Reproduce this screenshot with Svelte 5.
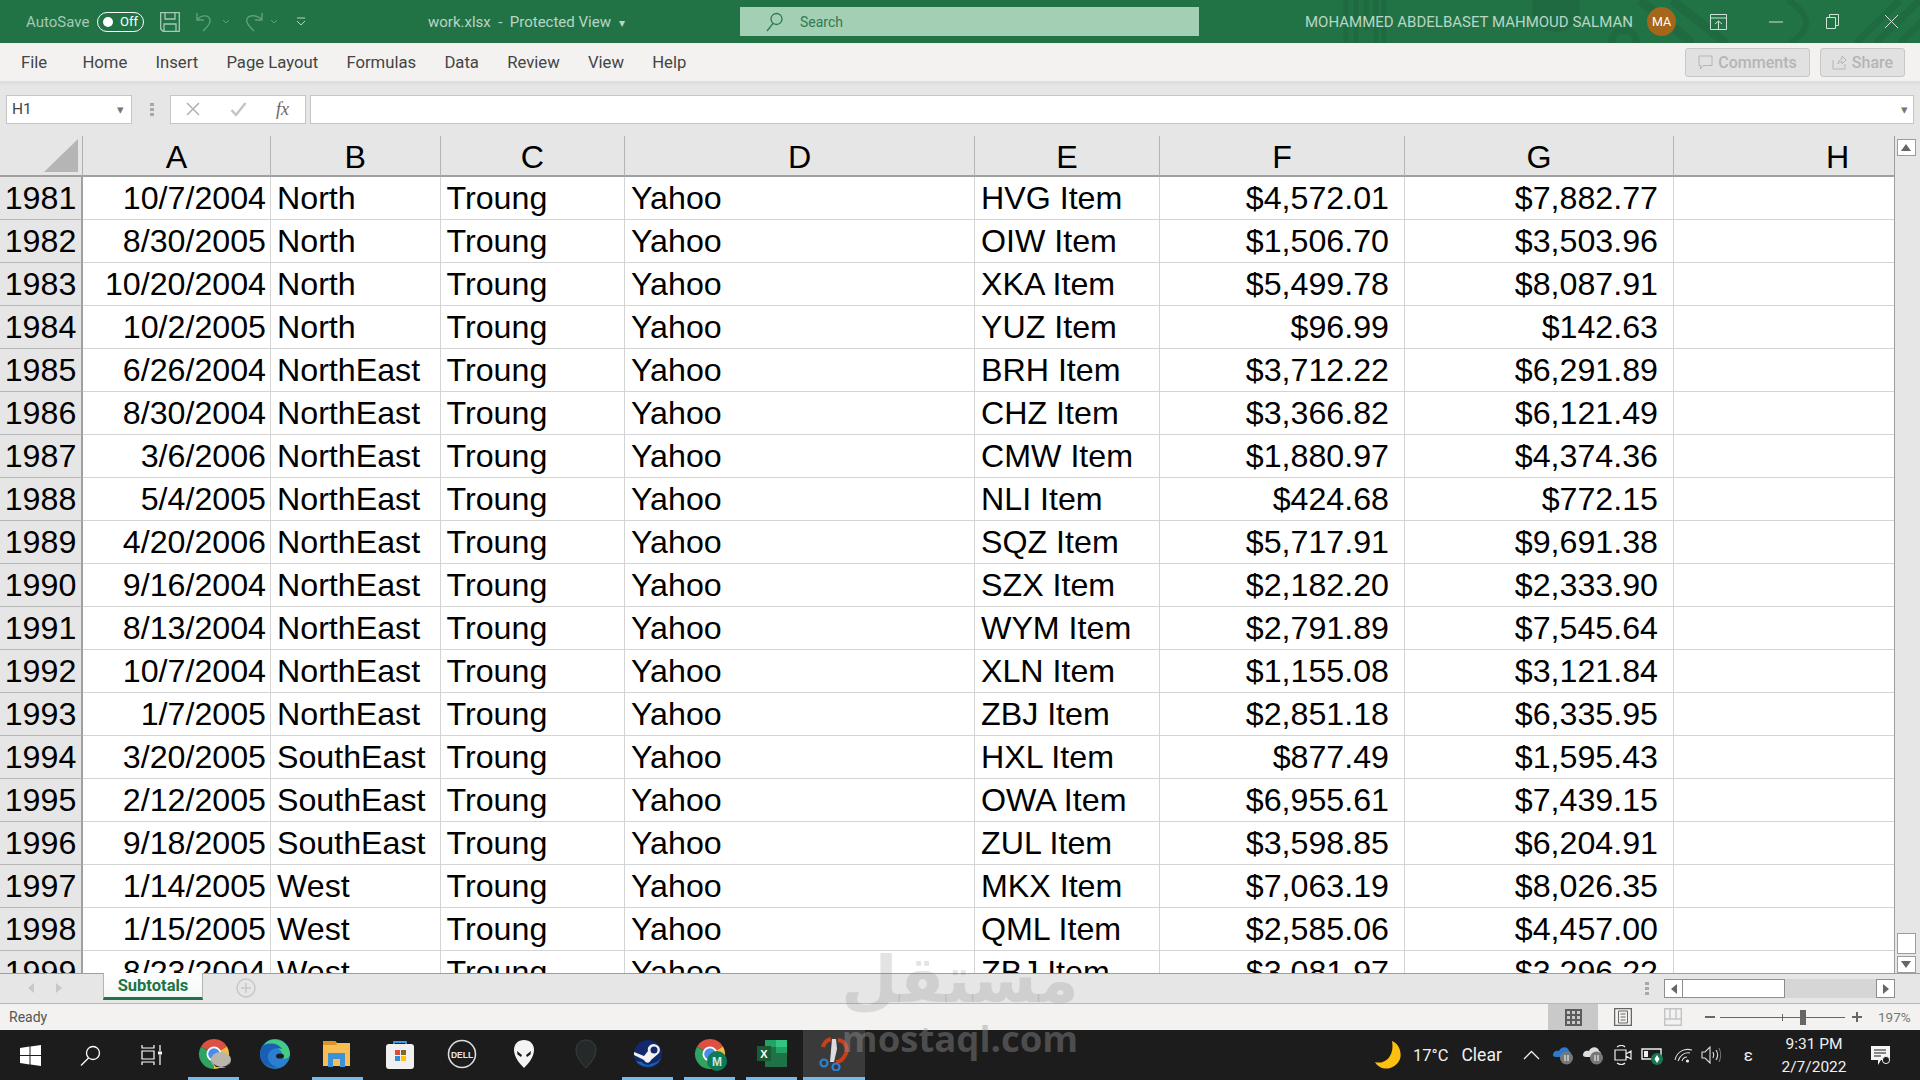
<script>
  const columns = ["A", "B", "C", "D", "E", "F", "G", "H"];

  const rows = [
    [1981, "10/7/2004", "North", "HVG Item", "$4,572.01", "$7,882.77"],
    [1982, "8/30/2005", "North", "OIW Item", "$1,506.70", "$3,503.96"],
    [1983, "10/20/2004", "North", "XKA Item", "$5,499.78", "$8,087.91"],
    [1984, "10/2/2005", "North", "YUZ Item", "$96.99", "$142.63"],
    [1985, "6/26/2004", "NorthEast", "BRH Item", "$3,712.22", "$6,291.89"],
    [1986, "8/30/2004", "NorthEast", "CHZ Item", "$3,366.82", "$6,121.49"],
    [1987, "3/6/2006", "NorthEast", "CMW Item", "$1,880.97", "$4,374.36"],
    [1988, "5/4/2005", "NorthEast", "NLI Item", "$424.68", "$772.15"],
    [1989, "4/20/2006", "NorthEast", "SQZ Item", "$5,717.91", "$9,691.38"],
    [1990, "9/16/2004", "NorthEast", "SZX Item", "$2,182.20", "$2,333.90"],
    [1991, "8/13/2004", "NorthEast", "WYM Item", "$2,791.89", "$7,545.64"],
    [1992, "10/7/2004", "NorthEast", "XLN Item", "$1,155.08", "$3,121.84"],
    [1993, "1/7/2005", "NorthEast", "ZBJ Item", "$2,851.18", "$6,335.95"],
    [1994, "3/20/2005", "SouthEast", "HXL Item", "$877.49", "$1,595.43"],
    [1995, "2/12/2005", "SouthEast", "OWA Item", "$6,955.61", "$7,439.15"],
    [1996, "9/18/2005", "SouthEast", "ZUL Item", "$3,598.85", "$6,204.91"],
    [1997, "1/14/2005", "West", "MKX Item", "$7,063.19", "$8,026.35"],
    [1998, "1/15/2005", "West", "QML Item", "$2,585.06", "$4,457.00"],
    [1999, "8/23/2004", "West", "ZBJ Item", "$3,081.97", "$3,296.22"],
  ];

  const tabs = ["Home", "Insert", "Page Layout", "Formulas", "Data", "Review", "View", "Help"];
</script>

{#snippet chrome()}
  <path d="M20 20L7 12.5A15 15 0 0 1 33 12.5Z" fill="#dd5144" />
  <path d="M20 20L33 12.5A15 15 0 0 1 20 35Z" fill="#f3bd3f" />
  <path d="M20 20L20 35A15 15 0 0 1 7 12.5Z" fill="#2fa35f" />
  <circle cx="20" cy="20" r="7.5" fill="#fff" />
  <circle cx="20" cy="20" r="5.8" fill="#4a8bf0" />
{/snippet}

<div class="app">
  <header class="titlebar">
    <svg class="pattern" width="620" height="43" viewBox="0 0 620 43" fill="none" stroke="#1f6a41">
      <path d="M46 0V43M56 0V43M66 0V30M76 0V43M84 0V43" stroke-width="5" />
      <ellipse cx="256" cy="8" rx="24" ry="24" fill="#1f6a41" stroke="none" />
      <circle cx="324" cy="42" r="12" stroke-width="7" />
      <path d="M340 0L392 43M372 0L426 43" stroke-width="9" />
      <path d="M488 0C512 16 512 30 490 43" stroke-width="6" />
      <path d="M600 0L556 43M620 0L576 43M630 14L600 43" stroke-width="7" />
    </svg>

    <span class="autosave">AutoSave</span>
    <span class="toggle"><i></i>Off</span>
    <svg class="qa save" width="20" height="20" viewBox="0 0 20 20" fill="none" stroke="#a6c9b5" stroke-width="1.3">
      <path d="M.7.7H19.3V19.3H3L.7 17ZM5 .7V7H15V.7M4 19.3V12H16V19.3" />
    </svg>
    <svg class="qa undo" width="26" height="20" viewBox="0 0 26 20" fill="none" stroke="#5f9f7d" stroke-width="1.4">
      <path d="M1 1V8H8M1 8C5 3 13 2 14 8C15 12 10 16 7 19" />
    </svg>
    <svg class="qa chev1" width="8" height="6" viewBox="0 0 8 6" fill="none" stroke="#5f9f7d"><path d="M1 1L4 4L7 1" /></svg>
    <svg class="qa redo" width="20" height="20" viewBox="0 0 20 20" fill="none" stroke="#5f9f7d" stroke-width="1.4">
      <path d="M19 1V8H12M19 8C15 3 6 2 4 7C2 11 8 16 11 19" />
    </svg>
    <svg class="qa chev2" width="8" height="6" viewBox="0 0 8 6" fill="none" stroke="#5f9f7d"><path d="M1 1L4 4L7 1" /></svg>
    <svg class="qa custom" width="10" height="10" viewBox="0 0 10 10" fill="none" stroke="#b7d5c4"><path d="M1 1H9M1 4L5 8L9 4" /></svg>

    <span class="doc">work.xlsx &nbsp;-&nbsp; Protected View <small>▾</small></span>

    <div class="search">
      <svg width="20" height="20" viewBox="0 0 20 20" fill="none" stroke="#2f7a52" stroke-width="1.3">
        <circle cx="12.5" cy="7" r="5.5" /><path d="M9 11.5L3 19" />
      </svg>
      <span>Search</span>
    </div>

    <span class="user">MOHAMMED ABDELBASET MAHMOUD SALMAN</span>
    <span class="avatar">MA</span>

    <svg class="win ribbon-btn" width="17" height="16" viewBox="0 0 17 16" fill="none" stroke="#cfe2d7">
      <path d="M.5 .5H16.5V15.5H.5ZM.5 4H16.5M5 10L8.5 7L12 10M8.5 7V15" />
    </svg>
    <svg class="win min-btn" width="14" height="2" viewBox="0 0 14 2"><path d="M0 1H14" stroke="#cfe2d7" /></svg>
    <svg class="win max-btn" width="13" height="15" viewBox="0 0 13 15" fill="none" stroke="#cfe2d7">
      <path d="M.5 3.5H9.5V14.5H.5ZM3.5 3.5V.5H12.5V11.5H9.5" />
    </svg>
    <svg class="win close-btn" width="15" height="15" viewBox="0 0 15 15" fill="none" stroke="#cfe2d7"><path d="M1 1L14 14M14 1L1 14" /></svg>
  </header>

  <nav class="tabs">
    <span class="file">File</span>
    {#each tabs as tab}
      <span>{tab}</span>
    {/each}
    <div class="tab-actions">
      <button class="comments">
        <svg width="15" height="15" viewBox="0 0 15 15" fill="none" stroke="#b5b5b5"><path d="M1 1H14V10.5H5L2.5 14V10.5H1Z" /></svg>
        Comments
      </button>
      <button class="share">
        <svg width="15" height="16" viewBox="0 0 15 16" fill="none" stroke="#b5b5b5"><path d="M1 6V15H13V10M6 10C6 6 9 5 10 5V2L14 6L10 10V7.5C8 7.5 7 8 6 10Z" /></svg>
        Share
      </button>
    </div>
  </nav>

  <section class="formula">
    <div class="namebox"><span>H1</span><small>▾</small></div>
    <span class="grip"></span>
    <div class="fx">
      <svg width="16" height="16" viewBox="0 0 16 16" fill="none" stroke="#b4b4b4" stroke-width="1.6"><path d="M2 2L14 14M14 2L2 14" /></svg>
      <svg width="17" height="16" viewBox="0 0 17 16" fill="none" stroke="#c4c4c4" stroke-width="2.4"><path d="M1.5 9L6 14L15.5 2" /></svg>
      <em>fx</em>
    </div>
    <div class="input"><small>▾</small></div>
  </section>

  <section class="sheet">
    <div class="grid">
      <div class="corner">
        <svg width="34" height="33" viewBox="0 0 34 33"><path d="M34 0V33H0Z" fill="#b5b5b5" /></svg>
      </div>
      {#each columns as col}
        <div class="colhead">{col}</div>
      {/each}
      {#each rows as row}
        <div class="rowhead">{row[0]}</div>
        <div class="cell right">{row[1]}</div>
        <div class="cell">{row[2]}</div>
        <div class="cell">Troung</div>
        <div class="cell">Yahoo</div>
        <div class="cell">{row[3]}</div>
        <div class="cell money">{row[4]}</div>
        <div class="cell money">{row[5]}</div>
        <div class="cell"></div>
      {/each}
    </div>
    <div class="vscroll">
      <span class="arrow up"><svg width="10" height="7" viewBox="0 0 10 7"><path d="M5 0L10 7H0Z" fill="#666" /></svg></span>
      <span class="thumb"></span>
      <span class="arrow"><svg width="10" height="7" viewBox="0 0 10 7"><path d="M5 7L10 0H0Z" fill="#666" /></svg></span>
    </div>
  </section>

  <section class="sheetbar">
    <span class="nav">
      <svg width="6" height="10" viewBox="0 0 6 10"><path d="M6 0V10L0 5Z" fill="#c8c8c8" /></svg>
      <svg width="6" height="10" viewBox="0 0 6 10"><path d="M0 0V10L6 5Z" fill="#c8c8c8" /></svg>
    </span>
    <span class="sheettab">Subtotals</span>
    <svg class="addsheet" width="20" height="20" viewBox="0 0 20 20" fill="none" stroke="#c6c6c6" stroke-width="1.4">
      <circle cx="10" cy="10" r="9" /><path d="M10 5V15M5 10H15" />
    </svg>
    <span class="grip wide"></span>
    <div class="hscroll">
      <span class="arrow"><svg width="6" height="10" viewBox="0 0 6 10"><path d="M6 0V10L0 5Z" fill="#666" /></svg></span>
      <span class="thumb"></span>
      <span class="track"></span>
      <span class="arrow"><svg width="6" height="10" viewBox="0 0 6 10"><path d="M0 0V10L6 5Z" fill="#666" /></svg></span>
    </div>
  </section>

  <footer class="status">
    <span class="ready">Ready</span>
    <div class="views">
      <span class="view on">
        <svg width="17" height="17" viewBox="0 0 17 17" fill="#5c5c5c"><path d="M0 0H17V17H0ZM2 2V5H5V2ZM7 2V5H10V2ZM12 2V5H15V2ZM2 7V10H5V7ZM7 7V10H10V7ZM12 7V10H15V7ZM2 12V15H5V12ZM7 12V15H10V12ZM12 12V15H15V12Z" fill-rule="evenodd" /></svg>
      </span>
      <span class="view">
        <svg width="18" height="18" viewBox="0 0 18 18" fill="none" stroke="#666"><path d="M.5 .5H17.5V17.5H.5Z" stroke-width="1.5" /><path d="M4.5 3H13.5V15H4.5ZM6.5 6H11.5M6.5 9H11.5M6.5 12H11.5" /></svg>
      </span>
      <span class="view">
        <svg width="18" height="18" viewBox="0 0 18 18" fill="none" stroke="#c4c4c4" stroke-width="1.4"><path d="M.7 .7H17.3V17.3H.7ZM.7 11H17.3M6 .7V11M12 .7V11" /></svg>
      </span>
    </div>
    <div class="zoom">
      <span class="pm"></span>
      <div class="slider"><i class="tick"></i><i class="knob"></i></div>
      <span class="pm plus"></span>
      <span class="pct">197%</span>
    </div>
  </footer>

  <footer class="taskbar">
    <span class="sys">
      <svg width="21" height="21" viewBox="0 0 21 21" fill="#fff"><path d="M0 3L9.5 1.6V10H0ZM10.5 1.4L21 0V10H10.5ZM0 11H9.5V19.4L0 18ZM10.5 11H21V21L10.5 19.6Z" /></svg>
    </span>
    <span class="sys">
      <svg width="21" height="21" viewBox="0 0 21 21" fill="none" stroke="#fff" stroke-width="1.3"><circle cx="13" cy="8" r="6.5" /><path d="M8.5 13L1 20.5" /></svg>
    </span>
    <span class="sys wide">
      <svg width="21" height="20" viewBox="0 0 21 20" fill="none" stroke="#fff" stroke-width="1.2"><path d="M1 0V3H13V0M1 20V17H13V20M1 6H13V14H1ZM19 0V6M19 10V20" /><rect x="17" y="6.5" width="4" height="3" fill="#fff" stroke="none" /></svg>
    </span>

    <span class="tb open">
      <svg width="40" height="40" viewBox="0 0 40 40">
        {@render chrome()}
        <ellipse cx="27" cy="26" rx="10" ry="8" fill="#b9b5ac" />
        <path d="M18 28C22 34 32 35 36 28L34 33H22Z" fill="#222" />
      </svg>
    </span>
    <span class="tb">
      <svg width="34" height="34" viewBox="0 0 34 34">
        <circle cx="16" cy="17" r="15" fill="#2a7fd0" />
        <path d="M5 8C12 -2 30 2 31 17C31 22 24 23 22 20C27 14 15 7 5 8Z" fill="#44cc84" />
        <path d="M5 8C12 5 20 7 23 12C14 9 8 15 9 21C10 27 17 32 22 29C12 34 1 27 1 17C1 13 3 10 5 8Z" fill="#1a5fb4" />
        <ellipse cx="21" cy="19" rx="4" ry="2.6" fill="#1c1c1c" />
      </svg>
    </span>
    <span class="tb open">
      <svg width="30" height="28" viewBox="0 0 30 28">
        <path d="M0 1H12L14 3H27V26H0Z" fill="#f8be54" />
        <path d="M0 1H12L14 5H0Z" fill="#d9952a" />
        <path d="M5 27V13H22V27H17V19H10V27Z" fill="#3c92d9" />
      </svg>
    </span>
    <span class="tb">
      <svg width="30" height="30" viewBox="0 0 30 30">
        <path d="M9 6V3H21V6" fill="none" stroke="#3c9ce0" stroke-width="1.8" />
        <rect x="1" y="5" width="28" height="25" rx="3" fill="#f0f0f0" />
        <rect x="10" y="11" width="5" height="5" fill="#dc4d33" /><rect x="16" y="11" width="5" height="5" fill="#7f6a2a" />
        <rect x="10" y="17" width="5" height="5" fill="#2c8fd8" /><rect x="16" y="17" width="5" height="5" fill="#fcc40e" />
      </svg>
    </span>
    <span class="tb">
      <svg width="30" height="30" viewBox="0 0 30 30">
        <circle cx="15" cy="15" r="13.5" fill="none" stroke="#ddd" stroke-width="1.6" />
        <text x="15" y="18.5" text-anchor="middle" class="dell">DELL</text>
      </svg>
    </span>
    <span class="tb">
      <svg width="20" height="28" viewBox="0 0 20 28">
        <path d="M10 0C16 0 20 4 20 10C20 17 14 24 10 28C6 24 0 17 0 10C0 4 4 0 10 0Z" fill="#f4f4f4" />
        <path d="M3 11L8 15L7 17L3.5 14.5ZM17 11L12 15L13 17L16.5 14.5Z" fill="#1c1c1c" />
      </svg>
    </span>
    <span class="tb">
      <svg width="22" height="30" viewBox="0 0 22 30">
        <path d="M11 1C17 1 21 5 21 11C21 18 15 25 11 29C7 25 1 18 1 11C1 5 5 1 11 1Z" fill="#242a2a" stroke="#39403f" />
      </svg>
    </span>
    <span class="tb open">
      <svg width="28" height="28" viewBox="0 0 28 28">
        <circle cx="14" cy="14" r="14" fill="#12296b" />
        <path d="M0 15L10 20C12 24 16 23 17 20L24 14C27 12 27 5 20 4C15 4 13 8 14 11L10 16L0 12C0 13 0 14 0 15Z" fill="#f2f2f2" />
        <circle cx="20" cy="10" r="3.5" fill="#12296b" />
        <path d="M2 21C6 28 22 30 27 18C24 22 20 23 17 24C13 26 9 24 8 22Z" fill="#1763b5" />
      </svg>
    </span>
    <span class="tb open">
      <svg width="40" height="40" viewBox="0 0 40 40">
        {@render chrome()}
        <circle cx="27" cy="27" r="10" fill="#0f7a58" />
        <text x="27" y="31.5" text-anchor="middle" class="chrome-m">M</text>
      </svg>
    </span>
    <span class="tb open">
      <svg width="30" height="28" viewBox="0 0 30 28">
        <rect x="8" y="0" width="22" height="27" fill="#1f7246" />
        <rect x="8" y="0" width="11" height="7" fill="#21a366" /><rect x="19" y="0" width="11" height="7" fill="#33c481" />
        <rect x="19" y="7" width="11" height="6" fill="#21a366" />
        <rect x="0" y="6" width="14" height="15" fill="#185c37" />
        <text x="7" y="18" text-anchor="middle" class="xl">X</text>
      </svg>
    </span>
    <span class="tb open active">
      <svg width="30" height="34" viewBox="0 0 30 34" fill="none">
        <path d="M19 3C28 4 30 14 25 20C23 23 20 25 17 25" stroke="#c8401b" stroke-width="4" />
        <path d="M12 2C8 3 5 6 4 10" stroke="#c8401b" stroke-width="4" />
        <path d="M13 2H17L18 12L15 25H11Z" fill="#dcdcdc" />
        <circle cx="5" cy="26" r="3.5" stroke="#2d82d6" stroke-width="2.2" />
        <circle cx="17" cy="30" r="3.5" stroke="#2d82d6" stroke-width="2.2" />
      </svg>
    </span>

    <div class="tray">
      <svg class="moon" width="26" height="28" viewBox="0 0 26 28"><path d="M17 0C24 3 27 11 25 18C22 26 12 30 5 26C3 25 1 23 0 21C9 24 20 16 17 0Z" fill="#fdc00f" /></svg>
      <span class="temp">17°C</span>
      <span class="clear">Clear</span>
      <svg class="caret" width="17" height="10" viewBox="0 0 17 10" fill="none" stroke="#eee" stroke-width="1.3"><path d="M1 9L8.5 1.5L16 9" /></svg>
      <svg class="ic one" width="22" height="20" viewBox="0 0 22 20">
        <path d="M1 10C1 6 5 5 7 6C9 1 16 1 17 6C20 7 19 12 17 12H4C2 12 1 11 1 10Z" fill="#2a7ad0" />
        <circle cx="14.5" cy="13" r="6.5" fill="#777" /><path d="M13 10V16M16 10V16" stroke="#fff" />
      </svg>
      <svg class="ic two" width="22" height="20" viewBox="0 0 22 20">
        <path d="M1 10C1 6 5 5 7 6C9 1 16 1 17 6C20 7 19 12 17 12H4C2 12 1 11 1 10Z" fill="#ddd" />
        <circle cx="14.5" cy="13" r="6.5" fill="#777" /><path d="M13 10V16M16 10V16" stroke="#fff" />
      </svg>
      <svg class="ic three" width="18" height="20" viewBox="0 0 18 20" fill="none" stroke="#eee" stroke-width="1.2">
        <path d="M1 5H12V15H1ZM12 9L17 6V14L12 11M3 2C6 0 9 0 11 2M3 18C6 20 9 20 11 18" />
      </svg>
      <svg class="ic four" width="24" height="20" viewBox="0 0 24 20">
        <path d="M1 4H20V14H1ZM4 6.5V11.5" fill="none" stroke="#eee" stroke-width="1.4" />
        <rect x="3" y="6" width="4" height="6" fill="#eee" />
        <circle cx="16" cy="14" r="6" fill="#167a4f" /><path d="M16 10L18.5 14L16 18L13.5 14Z" fill="#fff" />
      </svg>
      <svg class="ic five" width="20" height="18" viewBox="0 0 20 18" fill="none" stroke="#ddd" stroke-width="1.1">
        <path d="M1 14C3 5 11 2 18 4M4 15C6 9 11 6 16 7M8 15C9 12 11 11 13 11" />
        <circle cx="13.5" cy="15" r="1.6" fill="#eee" stroke="none" />
      </svg>
      <svg class="ic six" width="20" height="18" viewBox="0 0 20 18" fill="none" stroke="#ddd" stroke-width="1.1">
        <path d="M1 6H4L9 1V17L4 12H1Z" /><path d="M12 6C13 8 13 10 12 12M15 4C17 7 17 11 15 14" /><path d="M18 2C20 6 20 12 18 16" stroke="#777" />
      </svg>
      <span class="lang">ε</span>
      <div class="clock"><span>9:31 PM</span><span>2/7/2022</span></div>
      <svg class="note" width="20" height="19" viewBox="0 0 20 19">
        <path d="M0 0H19V14H10L7 19V14H0Z" fill="#f5f5f5" />
        <path d="M3 4H15M3 7H15M3 10H10" stroke="#1c1c1c" stroke-width="1.1" />
        <circle cx="15" cy="14" r="3.6" fill="#1c1c1c" stroke="#eee" />
      </svg>
    </div>
  </footer>

  <!-- site watermark lies over the bottom of the screenshot -->
  <div class="watermark">
    <span class="ar">مستقل</span>
    <span class="en">mostaql.com</span>
  </div>
</div>

<style>
  :global(body) {
    margin: 0;
    overflow: hidden;
  }

  .app {
    position: relative;
    width: 1920px;
    height: 1080px;
    display: flex;
    flex-direction: column;
    overflow: hidden;
    font-family: Roboto, "Liberation Sans", sans-serif;
    background: #e6e6e6;
  }

  /* title bar */
  .titlebar {
    position: relative;
    height: 43px;
    flex: none;
    display: flex;
    align-items: center;
    background: #217346;
    color: #b9d6c5;
    font-size: 15px;
  }
  .titlebar > :not(.pattern) {
    position: relative;
  }
  .pattern {
    position: absolute;
    left: 1300px;
    top: 0;
  }
  .autosave {
    margin-left: 26px;
    width: 71px;
    color: #a6c9b5;
  }
  .toggle {
    width: 47px;
    height: 20px;
    box-sizing: border-box;
    border: 1.5px solid #fff;
    border-radius: 10px;
    display: flex;
    align-items: center;
    gap: 7px;
    padding-left: 5px;
    color: #fff;
    font-size: 13px;
  }
  .toggle i {
    width: 10px;
    height: 10px;
    border-radius: 50%;
    background: #fff;
  }
  .save { margin-left: 16px; }
  .undo { margin-left: 16px; }
  .chev1 { margin-left: 0; }
  .redo { margin-left: 13px; }
  .chev2 { margin-left: 7px; }
  .custom { margin-left: 18px; }
  .doc {
    position: relative;
    margin-left: 122px;
    width: 312px;
    white-space: nowrap;
  }
  .doc small {
    font-size: 12px;
    margin-left: 4px;
  }
  .search {
    width: 459px;
    height: 29px;
    background: #a3cfb5;
    display: flex;
    align-items: center;
    gap: 16px;
    padding-left: 24px;
    box-sizing: border-box;
    color: #2f7a52;
    font-size: 14px;
  }
  .user {
    margin-left: 106px;
    width: 342px;
    white-space: nowrap;
  }
  .avatar {
    width: 29px;
    height: 29px;
    border-radius: 50%;
    background: #a5651b;
    color: #fff;
    font-size: 12.5px;
    display: flex;
    align-items: center;
    justify-content: center;
  }
  .ribbon-btn { margin-left: 34px; }
  .min-btn { margin-left: 42px; }
  .max-btn { margin-left: 43px; }
  .close-btn { margin-left: 45px; }

  /* ribbon tabs */
  .tabs {
    height: 38px;
    flex: none;
    display: flex;
    align-items: center;
    gap: 28.2px;
    padding-left: 21px;
    background: #f3f2f1;
    color: #444;
    font-size: 16.7px;
  }
  .file { margin-right: 7px; }
  .tab-actions {
    margin-left: auto;
    margin-right: 15px;
    display: flex;
    gap: 10px;
  }
  .tab-actions button {
    height: 29px;
    display: flex;
    align-items: center;
    justify-content: center;
    gap: 5px;
    padding: 0;
    border: 1px solid #c8c8c8;
    border-radius: 3px;
    background: #e1e1e1;
    color: #b5b5b5;
    font: 500 16px Roboto, sans-serif;
  }
  .comments { width: 125px; }
  .share { width: 85px; }

  /* formula bar */
  .formula {
    height: 55px;
    flex: none;
    display: flex;
    align-items: center;
    padding: 1px 6px 0 6px;
    box-sizing: border-box;
    background: linear-gradient(#dcdcdc, #e6e6e6 6px);
  }
  .namebox {
    width: 126px;
    height: 29px;
    box-sizing: border-box;
    background: #fff;
    border: 1px solid #c6c6c6;
    display: flex;
    align-items: center;
    justify-content: space-between;
    padding: 0 7px 0 5px;
    color: #444;
    font-size: 15.5px;
  }
  .namebox small,
  .input small {
    color: #777;
    font-size: 13px;
  }
  .grip {
    width: 4px;
    height: 13px;
    margin: 0 16px 0 18px;
    background: repeating-linear-gradient(#a8a8a8 0 3px, transparent 3px 5px);
  }
  .fx {
    width: 136px;
    height: 29px;
    box-sizing: border-box;
    background: #fff;
    border: 1px solid #c6c6c6;
    display: flex;
    align-items: center;
    gap: 29px;
    padding-left: 14px;
  }
  .fx em {
    font: italic 18px "Liberation Serif", serif;
    color: #666;
  }
  .input {
    flex: 1;
    height: 29px;
    margin-left: 4px;
    box-sizing: border-box;
    background: #fff;
    border: 1px solid #c6c6c6;
    display: flex;
    align-items: center;
    justify-content: flex-end;
    padding-right: 5px;
  }

  /* worksheet, column H runs on past the scrollbar */
  .sheet {
    height: 838px;
    flex: none;
    display: flex;
    overflow: hidden;
    border-bottom: 1px solid #9e9e9e;
    box-sizing: border-box;
  }
  .grid {
    width: 1895px;
    flex: none;
    display: grid;
    grid-template-columns: 83px 188px 169.5px 184.5px 350px 185px 245px 269px 328px;
    grid-auto-rows: 43px;
    grid-template-rows: 41px;
    align-content: start;
    overflow: hidden;
    border-right: 1px solid #9e9e9e;
    box-sizing: border-box;
    font-family: "Liberation Sans", Arial, sans-serif;
    font-size: 32.2px;
    color: #000;
  }
  .corner,
  .colhead {
    background: #e6e6e6;
    border-bottom: 2px solid #a0a0a0;
    box-sizing: border-box;
  }
  .corner {
    display: flex;
    align-items: flex-end;
    justify-content: flex-end;
    padding: 0 4px 3px 0;
    border-right: 1px solid #b0b0b0;
  }
  .colhead {
    display: flex;
    align-items: center;
    justify-content: center;
    padding-top: 3px;
    border-right: 1px solid #b4b4b4;
  }
  .rowhead {
    background: #e6e6e6;
    border-right: 2px solid #a0a0a0;
    border-bottom: 1px solid #b8b8b8;
    box-sizing: border-box;
    display: flex;
    align-items: center;
    justify-content: center;
  }
  .cell {
    background: #fff;
    border-right: 1px solid #d4d4d4;
    border-bottom: 1px solid #d4d4d4;
    box-sizing: border-box;
    display: flex;
    align-items: center;
    padding: 0 0 0 6px;
    white-space: nowrap;
  }
  .right {
    justify-content: flex-end;
    padding-right: 4px;
  }
  .money {
    justify-content: flex-end;
    padding-right: 15px;
  }
  .vscroll {
    flex: 1;
    display: flex;
    flex-direction: column;
    align-items: center;
    padding: 3px 3px 0 0;
    box-sizing: border-box;
    background: #e6e6e6;
  }
  .vscroll .arrow {
    width: 19px;
    height: 17px;
    flex: none;
    box-sizing: border-box;
    background: #fff;
    border: 1px solid #9c9c9c;
    display: flex;
    align-items: center;
    justify-content: center;
  }
  .vscroll .thumb {
    width: 19px;
    height: 21px;
    flex: none;
    margin-top: auto;
    margin-bottom: 2px;
    box-sizing: border-box;
    background: #fff;
    border: 1px solid #9c9c9c;
  }

  /* sheet tabs row */
  .sheetbar {
    height: 29px;
    flex: none;
    display: flex;
    align-items: flex-start;
    background: #e6e6e6;
    border-bottom: 1px solid #b8b8b8;
  }
  .nav {
    width: 103px;
    box-sizing: border-box;
    display: flex;
    gap: 22px;
    padding: 9px 0 0 28px;
  }
  .sheettab {
    width: 100px;
    height: 27px;
    margin-top: -1px;
    box-sizing: border-box;
    border: 1px solid #b4b4b4;
    border-top: 0;
    border-bottom: 3px solid #217346;
    background: linear-gradient(#fff, #f2f8f5);
    color: #217346;
    font-weight: 700;
    font-size: 16.5px;
    text-align: center;
    line-height: 26px;
  }
  .addsheet {
    margin: 4px 0 0 33px;
  }
  .grip.wide {
    margin: 8px 15px 0 auto;
  }
  .hscroll {
    width: 231px;
    height: 19px;
    margin: 5px 25px 0 0;
    display: flex;
    background: #d6d6d6;
  }
  .hscroll span {
    box-sizing: border-box;
    display: flex;
    align-items: center;
    justify-content: center;
  }
  .hscroll .arrow,
  .hscroll .thumb {
    background: #fff;
    border: 1px solid #8e8e8e;
  }
  .hscroll .arrow { width: 19px; }
  .hscroll .thumb { width: 102px; border-left: 0; }
  .hscroll .track { flex: 1; }

  /* status bar */
  .status {
    height: 26px;
    flex: none;
    display: flex;
    align-items: center;
    background: #f3f2f1;
    color: #555;
    font-size: 14px;
  }
  .ready { margin-left: 9px; }
  .views {
    margin-left: auto;
    display: flex;
    height: 100%;
  }
  .view {
    width: 50px;
    display: flex;
    align-items: center;
    justify-content: center;
  }
  .view.on { background: #c9c9c9; }
  .zoom {
    width: 222px;
    box-sizing: border-box;
    display: flex;
    align-items: center;
    padding-left: 7px;
  }
  .pm {
    position: relative;
    width: 10px;
    height: 2px;
    background: #666;
  }
  .pm.plus::after {
    content: "";
    position: absolute;
    left: 4px;
    top: -4px;
    width: 2px;
    height: 10px;
    background: #666;
  }
  .slider {
    position: relative;
    width: 125px;
    height: 1px;
    margin: 0 7px 0 5px;
    background: #666;
  }
  .tick {
    position: absolute;
    left: 62px;
    top: -3px;
    width: 1px;
    height: 7px;
    background: #666;
  }
  .knob {
    position: absolute;
    left: 80px;
    top: -7px;
    width: 6px;
    height: 15px;
    background: #666;
  }
  .pct {
    margin-left: 16px;
    color: #777;
    font-size: 13.5px;
    white-space: nowrap;
  }

  /* windows taskbar */
  .taskbar {
    height: 50px;
    flex: none;
    display: flex;
    align-items: stretch;
    background: #1c1c1c;
    color: #f0f0f0;
  }
  .sys {
    width: 60px;
    display: flex;
    align-items: center;
    justify-content: center;
  }
  .sys.wide { width: 63px; }
  .tb {
    position: relative;
    width: 62px;
    box-sizing: border-box;
    display: flex;
    align-items: center;
    justify-content: center;
    padding-bottom: 3px;
  }
  .tb.open::after {
    content: "";
    position: absolute;
    left: 5px;
    right: 6px;
    bottom: 0;
    height: 3px;
    background: #76b9ed;
  }
  .tb.active { background: #3a3a3a; }
  .tb.active::after { left: 0; right: 0; }
  .dell {
    font: 700 8.5px "Liberation Sans", sans-serif;
    fill: #e8e8e8;
  }
  .chrome-m {
    font: 700 12px "Liberation Sans", sans-serif;
    fill: #cfe6d8;
  }
  .xl {
    font: 700 11px "Liberation Sans", sans-serif;
    fill: #fff;
  }
  .tray {
    flex: 1;
    display: flex;
    align-items: center;
    font-size: 17.5px;
  }
  .moon { margin-left: 510px; }
  .temp { margin-left: 12px; font-size: 16.5px; }
  .clear { margin-left: 13px; }
  .caret { margin-left: 21px; }
  .one { margin-left: 12px; }
  .two { margin-left: 8px; }
  .three { margin-left: 10px; }
  .four { margin-left: 9px; }
  .five { margin-left: 9px; }
  .six { margin-left: 7px; }
  .lang {
    margin-left: 23px;
    font-size: 17px;
  }
  .clock {
    width: 90px;
    margin-left: 16px;
    display: flex;
    flex-direction: column;
    align-items: center;
    gap: 5px;
    font-size: 15.5px;
  }
  .note { margin-left: 12px; }

  /* watermark */
  .watermark {
    position: absolute;
    left: 845px;
    top: 946px;
    width: 230px;
    display: flex;
    flex-direction: column;
    align-items: center;
    pointer-events: none;
    font-family: "DejaVu Sans", sans-serif;
    font-weight: 700;
    color: rgba(128, 128, 128, 0.22);
  }
  .ar {
    font-size: 65px;
    line-height: 67px;
  }
  .en {
    font-family: "Open Sans", sans-serif;
    font-size: 36.5px;
    line-height: 50px;
    color: rgba(150, 150, 150, 0.42);
  }
</style>
